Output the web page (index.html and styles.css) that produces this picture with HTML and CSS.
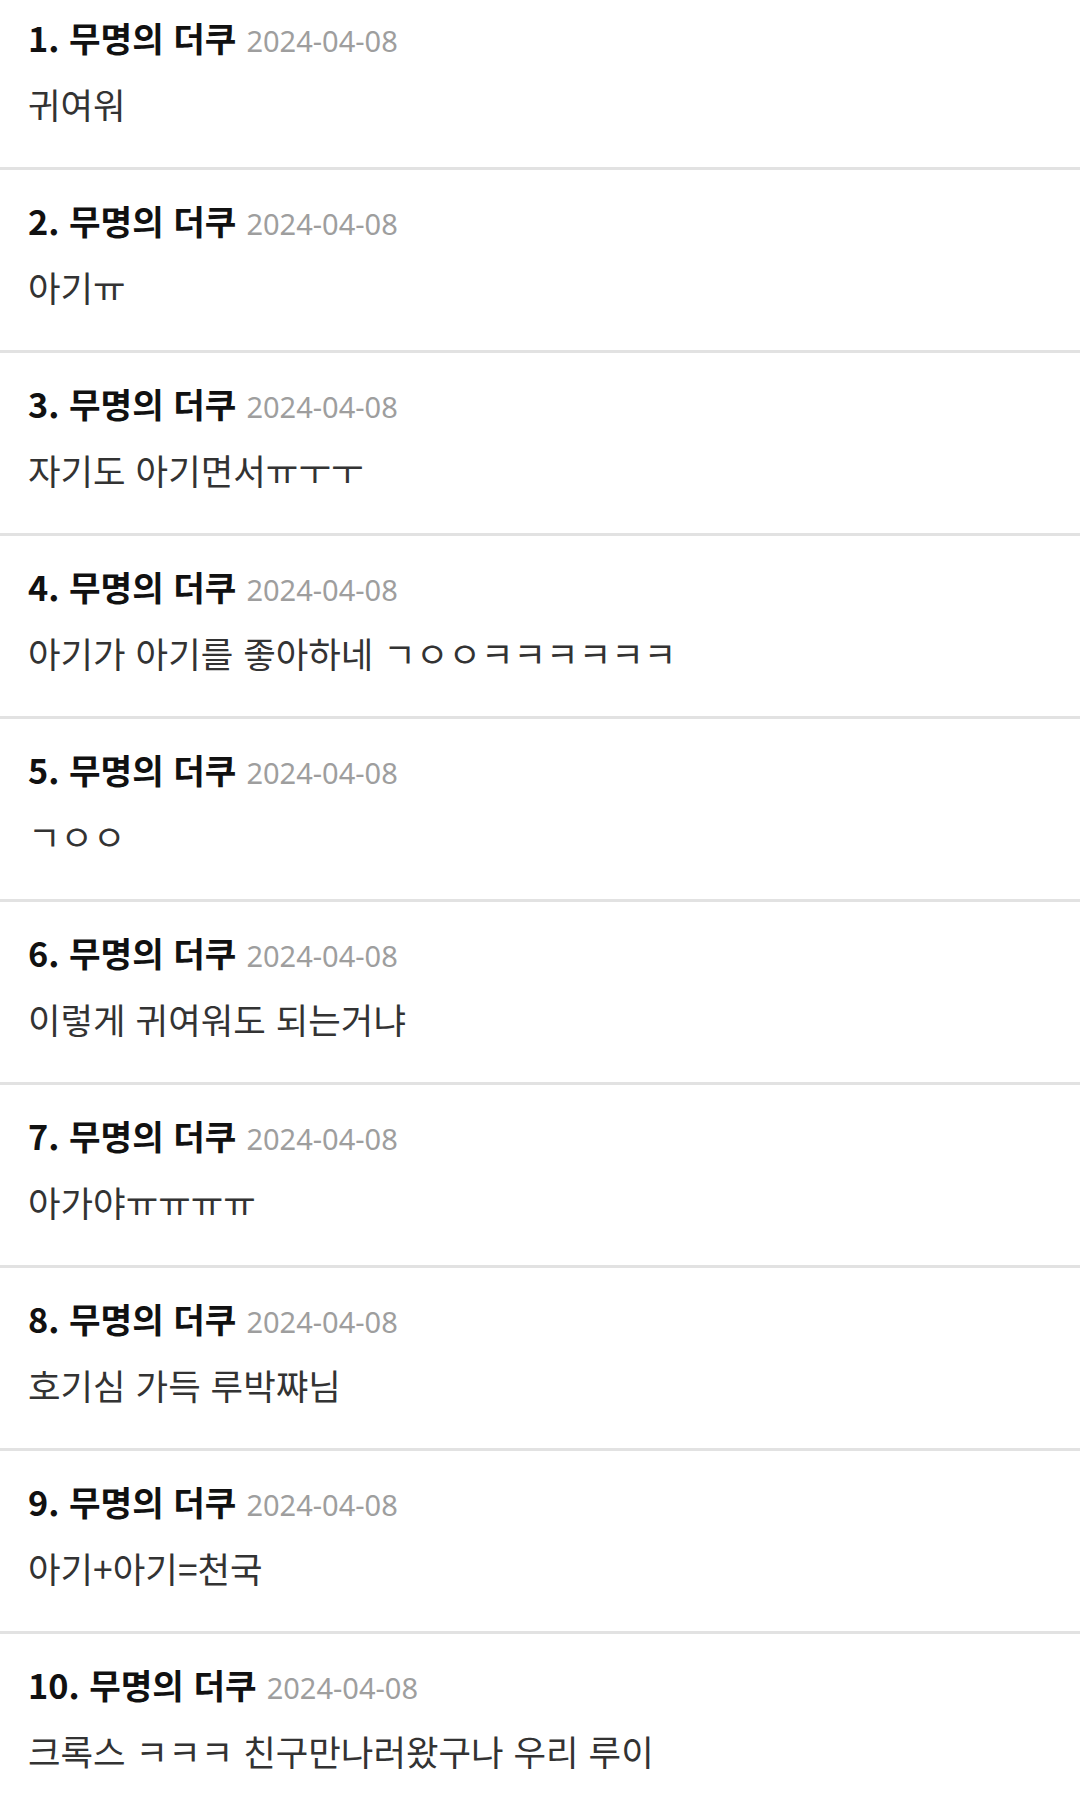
FILE: index.html
```html
<!DOCTYPE html>
<html lang="ko">
<head>
    <meta charset="UTF-8">
    <meta name="viewport" content="width=device-width, initial-scale=1.0">
    <title>댓글</title>
    <link rel="stylesheet" href="styles.css">
</head>
<body>

<ul class="comments">
    <li class="comment">
        <div class="comment-head"><span class="author">1. 무명의 더쿠</span><span class="date">2024-04-08</span></div>
        <p class="comment-text">귀여워</p>
    </li>
    <li class="comment">
        <div class="comment-head"><span class="author">2. 무명의 더쿠</span><span class="date">2024-04-08</span></div>
        <p class="comment-text">아기ㅠ</p>
    </li>
    <li class="comment">
        <div class="comment-head"><span class="author">3. 무명의 더쿠</span><span class="date">2024-04-08</span></div>
        <p class="comment-text">자기도 아기면서ㅠㅜㅜ</p>
    </li>
    <li class="comment">
        <div class="comment-head"><span class="author">4. 무명의 더쿠</span><span class="date">2024-04-08</span></div>
        <p class="comment-text">아기가 아기를 좋아하네 ㄱㅇㅇㅋㅋㅋㅋㅋㅋ</p>
    </li>
    <li class="comment">
        <div class="comment-head"><span class="author">5. 무명의 더쿠</span><span class="date">2024-04-08</span></div>
        <p class="comment-text">ㄱㅇㅇ</p>
    </li>
    <li class="comment">
        <div class="comment-head"><span class="author">6. 무명의 더쿠</span><span class="date">2024-04-08</span></div>
        <p class="comment-text">이렇게 귀여워도 되는거냐</p>
    </li>
    <li class="comment">
        <div class="comment-head"><span class="author">7. 무명의 더쿠</span><span class="date">2024-04-08</span></div>
        <p class="comment-text">아가야ㅠㅠㅠㅠ</p>
    </li>
    <li class="comment">
        <div class="comment-head"><span class="author">8. 무명의 더쿠</span><span class="date">2024-04-08</span></div>
        <p class="comment-text">호기심 가득 루박쨔님</p>
    </li>
    <li class="comment">
        <div class="comment-head"><span class="author">9. 무명의 더쿠</span><span class="date">2024-04-08</span></div>
        <p class="comment-text">아기+아기=천국</p>
    </li>
    <li class="comment">
        <div class="comment-head"><span class="author">10. 무명의 더쿠</span><span class="date">2024-04-08</span></div>
        <p class="comment-text">크록스 ㅋㅋㅋ 친구만나러왔구나 우리 루이</p>
    </li>
</ul>

</body>
</html>
```

FILE: styles.css
```css
body {
    font-family: "Noto Sans CJK KR", sans-serif;
    margin: 0;
    padding: 0;
    background-color: #fff;
}

.comments {
    list-style-type: none;
    margin: 0;
    padding: 0;
}

.comment {
    padding: 30px 28px 43px;
    border-bottom: 3px solid #e2e2e2;
}

.comment:first-child {
    padding-top: 17px;
}

.comment:last-child {
    border-bottom: none;
}

.comment-head {
    display: flex;
    align-items: baseline;
    height: 40px;
    white-space: nowrap;
}

.author {
    font-size: 34.3px;
    line-height: 40px;
    font-weight: 700;
    color: #111;
}

.date {
    margin-left: 10px;
    font-family: "Noto Sans", sans-serif;
    font-size: 29px;
    line-height: 40px;
    color: #9e9e9e;
}

.comment-text {
    margin: 27px 0 0;
    height: 40px;
    font-size: 35.4px;
    line-height: 40px;
    color: #333;
    white-space: nowrap;
}
```
